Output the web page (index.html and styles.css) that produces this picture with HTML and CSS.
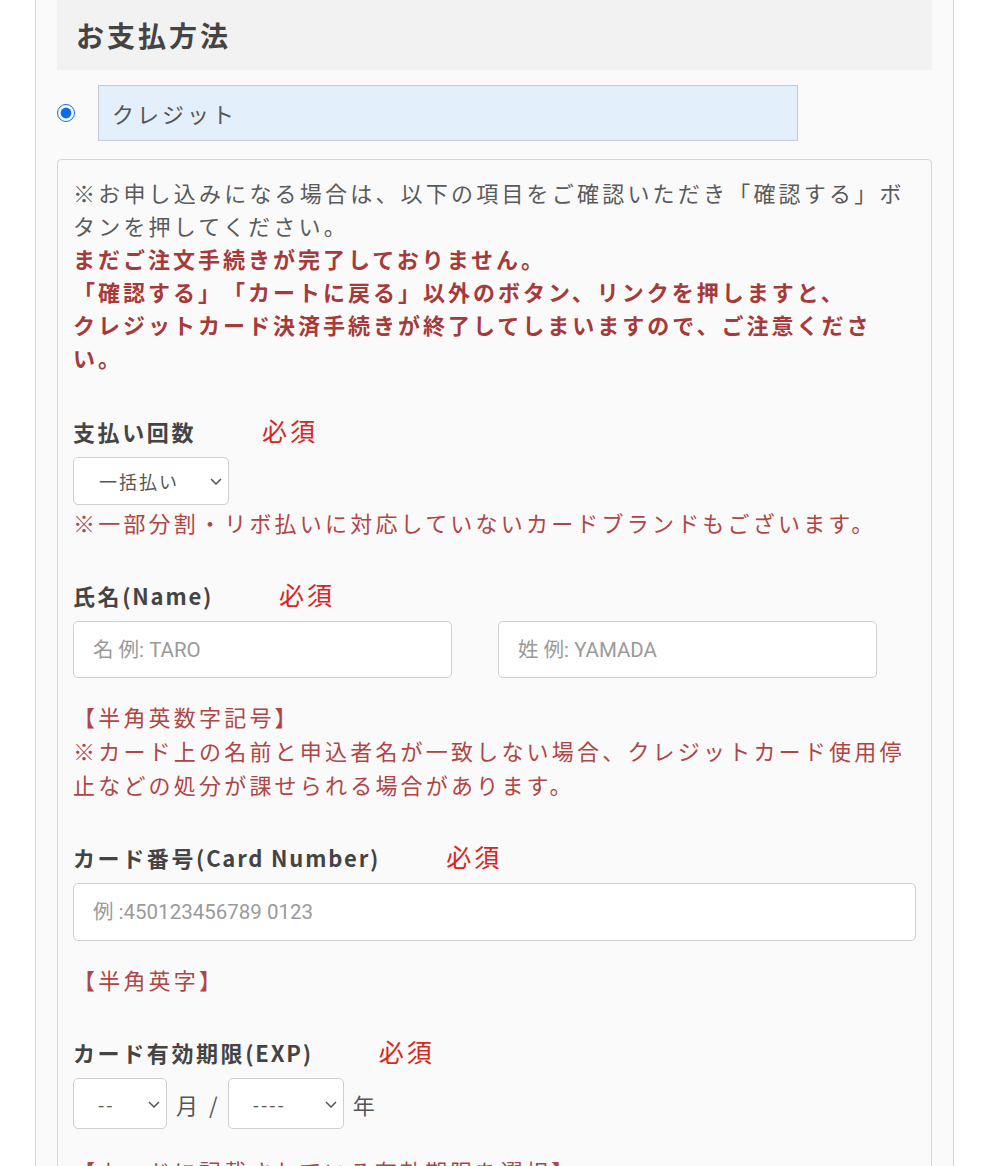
FILE: index.html
```html
<!DOCTYPE html>
<html lang="ja">
<head>
<meta charset="utf-8">
<title>お支払方法</title>
<link rel="stylesheet" href="styles.css">
</head>
<body>
<div class="card">
  <h2 class="card-title">お支払方法</h2>

  <div class="method">
    <input class="method-radio" type="radio" name="pay" checked>
    <div class="method-name">クレジット</div>
  </div>

  <div class="panel">
    <p class="intro">※お申し込みになる場合は、以下の項目をご確認いただき「確認する」ボタンを押してください。<span class="warn">まだご注文手続きが完了しておりません。<br>「確認する」「カートに戻る」以外のボタン、リンクを押しますと、<br>クレジットカード決済手続きが終了してしまいますので、ご注意ください。</span></p>

    <div class="field field-first">
      <div class="label-row"><span class="label">支払い回数</span><span class="required">必須</span></div>
      <div class="control">
        <div class="select-wrap">
          <select class="select select-count"><option>一括払い</option></select>
          <svg class="chev" viewBox="0 0 12 7" aria-hidden="true"><polyline points="1,1 6,6 11,1"/></svg>
        </div>
      </div>
      <p class="note">※一部分割・リボ払いに対応していないカードブランドもございます。</p>
    </div>

    <div class="field">
      <div class="label-row"><span class="label">氏名<span class="en">(Name)</span></span><span class="required">必須</span></div>
      <div class="control name-row">
        <input class="text-input name-input" type="text" placeholder="名 例: TARO">
        <input class="text-input name-input" type="text" placeholder="姓 例: YAMADA">
      </div>
      <p class="note note-spaced">【半角英数字記号】<br>※カード上の名前と申込者名が一致しない場合、クレジットカード使用停止などの処分が課せられる場合があります。</p>
    </div>

    <div class="field">
      <div class="label-row"><span class="label">カード番号<span class="en">(Card Number)</span></span><span class="required">必須</span></div>
      <div class="control">
        <input class="text-input card-input" type="text" placeholder="例 :450123456789 0123">
      </div>
      <p class="note note-spaced">【半角英字】</p>
    </div>

    <div class="field field-exp">
      <div class="label-row"><span class="label">カード有効期限<span class="en">(EXP)</span></span><span class="required">必須</span></div>
      <div class="control exp-row">
        <div class="select-wrap">
          <select class="select select-month"><option>--</option></select>
          <svg class="chev" viewBox="0 0 12 7" aria-hidden="true"><polyline points="1,1 6,6 11,1"/></svg>
        </div>
        <span class="unit">月</span><span class="slash">/</span>
        <div class="select-wrap">
          <select class="select select-year"><option>----</option></select>
          <svg class="chev" viewBox="0 0 12 7" aria-hidden="true"><polyline points="1,1 6,6 11,1"/></svg>
        </div>
        <span class="unit">年</span>
      </div>
      <p class="note note-last">【カードに記載されている有効期限を選択】</p>
    </div>
  </div>
</div>
</body>
</html>
```

FILE: styles.css
```css
* {
  box-sizing: border-box;
}

html,
body {
  margin: 0;
  padding: 0;
  background: #ffffff;
}

body {
  font-family: "Noto Sans CJK JP", "Noto Sans", sans-serif;
  color: #555555;
  text-spacing-trim: space-all;
}

.card {
  margin-left: 35px;
  width: 919px;
  min-height: 1166px;
  border-left: 1px solid #d4d4d4;
  border-right: 1px solid #d4d4d4;
  background: #fafafa;
  padding: 0 21px 40px;
}

.card-title {
  margin: 0;
  height: 70px;
  background: #f2f2f2;
  padding-left: 19px;
  display: flex;
  align-items: center;
  font-size: 28px;
  font-weight: 700;
  letter-spacing: 3px;
  line-height: 1;
  color: #444444;
}

.method {
  display: flex;
  align-items: center;
  gap: 23px;
  margin-top: 15px;
}

.method-radio {
  width: 18px;
  height: 18px;
  margin: 0;
  accent-color: #0a6cf0;
}

.method-name {
  width: 700px;
  height: 56px;
  background: #e3f0fb;
  border: 1px solid #c4ccd4;
  display: flex;
  align-items: center;
  padding-left: 13px;
  font-size: 22px;
  letter-spacing: 3px;
  color: #555555;
}

.panel {
  margin-top: 18px;
  border: 1px solid #d6d6d6;
  border-radius: 4px;
  background: #fafafa;
  padding: 16px 15px 60px;
}

.intro {
  margin: 0;
  font-size: 22px;
  line-height: 33px;
  letter-spacing: 3.2px;
  color: #5a5a5a;
}

.warn {
  display: block;
  font-weight: 700;
  letter-spacing: 3px;
  color: #a63a3a;
}

.field {
  margin-top: 39px;
}

.field-first {
  margin-top: 40px;
}

.field-exp {
  margin-top: 39px;
}

.label-row {
  display: flex;
  align-items: baseline;
  line-height: 33px;
}

.label {
  font-size: 22px;
  font-weight: 700;
  letter-spacing: 2.6px;
  color: #444444;
}

.en {
  letter-spacing: 1.8px;
}

.required {
  margin-left: 66px;
  font-size: 25px;
  letter-spacing: 3px;
  color: #d7261e;
}

.control {
  margin-top: 9px;
}

.select-wrap {
  position: relative;
  display: inline-block;
}

.select {
  -webkit-appearance: none;
  appearance: none;
  display: block;
  margin: 0;
  border: 1px solid #cfcfcf;
  border-radius: 5px;
  background: #ffffff;
  font-family: inherit;
  font-size: 18px;
  letter-spacing: 2px;
  color: #555555;
  padding: 0 0 0 25px;
}

.select-count {
  width: 156px;
  height: 48px;
}

.select-month {
  width: 94px;
  height: 51px;
  padding-left: 24px;
}

.select-year {
  width: 116px;
  height: 51px;
  padding-left: 24px;
}

.chev {
  position: absolute;
  right: 7px;
  top: 50%;
  width: 12px;
  height: 7px;
  margin-top: -3px;
  fill: none;
  stroke: #555555;
  stroke-width: 1.5;
  pointer-events: none;
}

.name-row {
  display: flex;
  gap: 46px;
}

.text-input {
  display: block;
  margin: 0;
  height: 57px;
  border: 1px solid #cfcfcf;
  border-radius: 5px;
  background: #ffffff;
  padding: 0 19px;
  font-family: Roboto, "Noto Sans CJK JP", sans-serif;
  font-size: 20.5px;
  color: #333333;
}

.text-input::placeholder {
  color: #9a9a9a;
}

.name-input {
  width: 379px;
}

.card-input {
  width: 100%;
  height: 58px;
}

.note {
  margin: 0;
  font-size: 22px;
  line-height: 34px;
  letter-spacing: 3.2px;
  color: #b04545;
}

.note-spaced {
  margin-top: 21px;
}

.note-last {
  margin-top: 24px;
}

.exp-row {
  display: flex;
  align-items: center;
}

.unit {
  margin-left: 9px;
  font-size: 22px;
  color: #555555;
}

.slash {
  margin: 0 10px 0 11px;
  font-size: 22px;
  color: #555555;
}
```
